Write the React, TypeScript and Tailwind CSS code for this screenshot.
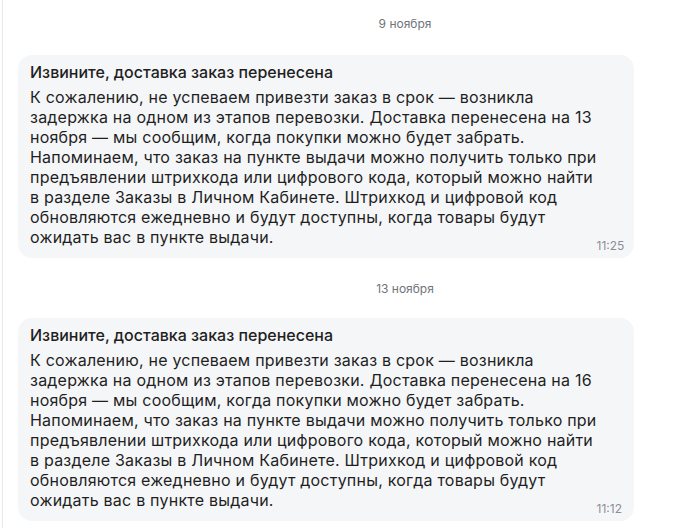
const lines = (day: number) => [
  "К сожалению, не успеваем привезти заказ в срок — возникла",
  `задержка на одном из этапов перевозки. Доставка перенесена на ${day}`,
  "ноября — мы сообщим, когда покупки можно будет забрать.",
  "Напоминаем, что заказ на пункте выдачи можно получить только при",
  "предъявлении штрихкода или цифрового кода, который можно найти",
  "в разделе Заказы в Личном Кабинете. Штрихкод и цифровой код",
  "обновляются ежедневно и будут доступны, когда товары будут",
  "ожидать вас в пункте выдачи.",
];

const messages = [
  { date: "9 ноября", day: 13, time: "11:25" },
  { date: "13 ноября", day: 16, time: "11:12" },
];

function DateLabel({ text }: { text: string }) {
  return (
    <div className="flex justify-center pl-[123px] text-[12px] leading-4 text-[#70737c]">
      {text}
    </div>
  );
}

function Bubble({ day, time }: { day: number; time: string }) {
  return (
    <div className="mr-[50px] ml-[15px] rounded-[14px] bg-[#f5f6f8] px-3 pt-[7px] pb-[11px] text-[#1f1f1f]">
      <p className="text-[16px] leading-5 font-medium">Извините, доставка заказ перенесена</p>
      <div className="mt-[5px] flex items-end justify-between">
        <p className="text-[16px] leading-5 tracking-[0.22px] whitespace-nowrap">
          {lines(day).map((l, i) => (
            <span key={i} className="block">
              {l}
            </span>
          ))}
        </p>
        <span className="-mb-[7px] text-[12px] leading-4 text-[#8b8e98]">{time}</span>
      </div>
    </div>
  );
}

export default function App() {
  return (
    <div
      className="min-h-[528px] w-[684px] overflow-hidden bg-white pl-[2px]"
      style={{ fontFamily: "Inter, 'Noto Sans', sans-serif" }}
    >
      <div className="min-h-[528px] border-l border-[#e8e8ea] pt-4">
        <DateLabel text={messages[0].date} />
        <div className="mt-[23px]">
          <Bubble day={messages[0].day} time={messages[0].time} />
        </div>
        <div className="mt-[23px]">
          <DateLabel text={messages[1].date} />
        </div>
        <div className="mt-[21px]">
          <Bubble day={messages[1].day} time={messages[1].time} />
        </div>
      </div>
    </div>
  );
}
